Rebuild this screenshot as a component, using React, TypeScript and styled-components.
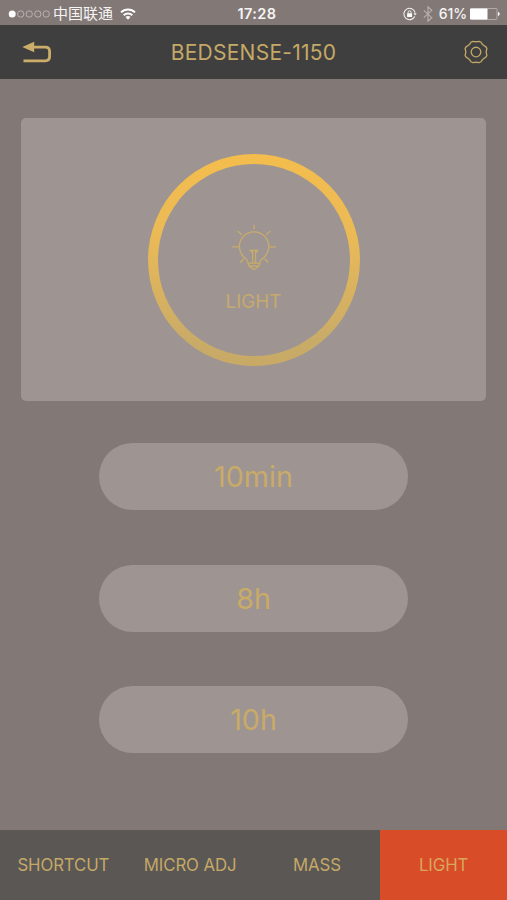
import React from 'react';
import styled, { createGlobalStyle } from 'styled-components';

const gold = '#c5a967';

const GlobalStyle = createGlobalStyle`
  * { box-sizing: border-box; }
  body { margin: 0; background: #827977; }
  button { border: 0; padding: 0; background: none; font: inherit; color: inherit; }
`;

const Screen = styled.div`
  width: 507px;
  height: 900px;
  display: flex;
  flex-direction: column;
  background: #827977;
  color: ${gold};
  font-family: Inter, 'Noto Sans CJK SC', sans-serif;
  overflow: hidden;
`;

const StatusBar = styled.div`
  height: 25px;
  flex: none;
  display: grid;
  grid-template-columns: 1fr auto 1fr;
  align-items: center;
  padding: 2px 7px 0 8px;
  color: #f6f4f3;
  font-size: 14px;
  line-height: 20px;
`;

const StatusGroup = styled.div<{ $end?: boolean }>`
  display: flex;
  align-items: center;
  justify-content: ${p => (p.$end ? 'flex-end' : 'flex-start')};
  svg { display: block; flex: none; }
`;

const Carrier = styled.span`
  font-family: 'Noto Sans CJK SC', sans-serif;
  font-size: 15px;
  margin: -1px 7px 0 2px;
`;

const Clock = styled.span`
  font-size: 14.5px;
  font-weight: 600;
  letter-spacing: 0.4px;
  padding-left: 6px;
`;

const Percent = styled.span`
  font-size: 14px;
  font-weight: 500;
  letter-spacing: -0.1px;
  margin: 0 3px 0 6px;
`;

const Header = styled.header`
  height: 54px;
  flex: none;
  display: grid;
  grid-template-columns: 60px 1fr 60px;
  align-items: center;
  background: #403f3f;
  svg { display: block; }
`;

const Title = styled.h1`
  margin: 0;
  padding-top: 2px;
  font-size: 21px;
  line-height: 26px;
  font-weight: 400;
  letter-spacing: 0.25px;
  text-align: center;
`;

const BackButton = styled.button`
  padding: 1px 0 0 21px;
`;

const SettingsButton = styled.button`
  padding-left: 17px;
`;

const Main = styled.main`
  flex: 1;
  display: flex;
  flex-direction: column;
  align-items: center;
  padding-top: 39.4px;
`;

const Card = styled.section`
  width: 465px;
  height: 283px;
  display: flex;
  align-items: center;
  justify-content: center;
  border-radius: 5px;
  background: #9e9592;
`;

const Dial = styled.button`
  width: 212px;
  height: 212px;
  border-radius: 50%;
  border: 10px solid transparent;
  background:
    linear-gradient(#9e9592, #9e9592) padding-box,
    linear-gradient(#f4bd4d 0%, #ebba56 38%, #c9ab68 88%, #c8aa66 100%) border-box;
  display: flex;
  flex-direction: column;
  align-items: center;
  padding-top: 60px;
`;

const DialLabel = styled.span`
  margin-top: 18px;
  font-size: 18.7px;
  line-height: 24px;
  letter-spacing: 0.1px;
  color: #c6aa6c;
`;

const Timers = styled.div`
  margin-top: 42px;
  display: grid;
  grid-auto-rows: 67px;
  gap: 54.3px;
`;

const Timer = styled.button`
  width: 309px;
  border-radius: 34px;
  background: #9e9592;
  color: #c9ab67;
  font-size: 28.7px;
  line-height: 67px;
  text-align: center;
`;

const TabBar = styled.nav`
  height: 70px;
  flex: none;
  display: grid;
  grid-template-columns: repeat(4, 1fr);
  background: #5a5755;
`;

const Tab = styled.button<{ $active?: boolean }>`
  font-size: 16.8px;
  letter-spacing: -0.1px;
  background: ${p => (p.$active ? '#d84c27' : 'transparent')};
  color: ${p => (p.$active ? '#d8a65c' : gold)};
`;

const Signal = () => (
  <svg width="43" height="10" viewBox="0 0 43 10">
    <circle cx="4.2" cy="5" r="3.5" fill="#fff" />
    {[12.7, 21.2, 29.8, 38.2].map(x => (
      <circle key={x} cx={x} cy="5" r="3.2" fill="none" stroke="#c4bebc" strokeWidth=".8" />
    ))}
  </svg>
);

const Wifi = () => (
  <svg width="16" height="12" viewBox="0 0 16 12" fill="none" stroke="#fff" strokeWidth="2">
    <path d="M1 4.4a10 10 0 0 1 14 0M3.7 7.2a6.2 6.2 0 0 1 8.6 0" />
    <path d="M8 11.7 5.5 9.1a3.6 3.6 0 0 1 5 0z" fill="#fff" stroke="none" />
  </svg>
);

const RotationLock = () => (
  <svg width="14" height="14" viewBox="0 0 14 14" fill="none" stroke="#f4f1f0">
    <path d="M11.7 9.5A5.7 5.7 0 1 1 12.1 5.6" strokeWidth="1.1" />
    <path d="m10.5 6.2 3.2 0-1.6 2.4z" fill="#f4f1f0" stroke="none" />
    <rect x="4.1" y="6.2" width="5" height="3.7" rx=".4" fill="#fff" stroke="none" />
    <path d="M5.1 6.4V5.3a1.5 1.5 0 0 1 3 0v1.1" strokeWidth="1" />
  </svg>
);

const Bluetooth = () => (
  <svg width="10" height="16" viewBox="0 0 10 16" fill="none" stroke="#b9b2b0" strokeWidth="1.1">
    <path d="m.8 4.3 8 7.4L5 15.2V.8l3.8 3.5-8 7.4" />
  </svg>
);

const Battery = () => (
  <svg width="30" height="12" viewBox="0 0 30 12">
    <rect x=".5" y=".5" width="26.5" height="11" rx="1" fill="none" stroke="#bdb7b5" strokeWidth=".8" />
    <rect x="0" y=".5" width="17.5" height="11" rx=".8" fill="#fff" />
    <path d="M28 3.8q3.5 2.2 0 4.4z" fill="#fff" />
  </svg>
);

const BackIcon = () => (
  <svg width="31" height="23" viewBox="0 0 31 23">
    <path d="M11 6.2h13.4q4.2 0 4.2 4.2v4.9q0 4.5-4.2 4.5H2.5" fill="none" stroke="#cbae69" strokeWidth="2.8" />
    <path d="M1.3 6 13.2.8v10.4z" fill="#cbae69" />
  </svg>
);

const GearIcon = () => (
  <svg width="24" height="24" viewBox="0 0 24 24" fill="none" stroke="#c0a667" strokeWidth="1.35">
    <path d="M8.8 1.3Q12 2.2 15.2 1.3 17.4 1.6 18.3 4.2L20.8 6.2Q23.3 7.4 22.8 9.3 21.6 12 22.8 14.7 23.3 16.6 20.8 17.8L18.3 19.8Q17.4 22.4 15.2 22.7 12 21.8 8.8 22.7 6.6 22.4 5.7 19.8L3.2 17.8Q.7 16.6 1.2 14.7 2.4 12 1.2 9.3.7 7.4 3.2 6.2L5.7 4.2Q6.6 1.6 8.8 1.3Z" strokeLinejoin="round" />
    <circle cx="12" cy="12" r="4.8" />
  </svg>
);

const BulbIcon = () => (
  <svg width="46" height="48" viewBox="0 0 46 48" fill="none" stroke="#c9ac6a" strokeWidth="1.25">
    <path d="M17.2 39.2c0-2.5-1.5-3.7-3-5A14.7 14.7 0 1 1 32 34.2c-1.6 1.3-3.2 2.5-3.2 5Z" />
    <path d="M17.2 39.2c0 3 1.6 3.6 3.2 4.2.5 2.6 4.7 2.6 5.2 0 1.6-.6 3.2-1.2 3.2-4.2M18.5 42h9M18.5 26.3h9M21.7 26.3v13M24.6 26.3v13M19.6 26.6l2 2.4M26.6 26.6l-2 2.4M23 .8v4.4M1 22.8h6.5M38.5 22.8H45M6.6 6.9l4.2 3.9M39.4 6.9l-4.2 3.9M9.2 38.5l3.6-3.8M37.2 38.5l-3.6-3.8" />
  </svg>
);

const Gap = styled.span`
  width: 6px;
`;

const timers = ['10min', '8h', '10h'];
const tabs = ['SHORTCUT', 'MICRO ADJ', 'MASS', 'LIGHT'];

export default function App() {
  return (
    <Screen>
      <GlobalStyle />
      <StatusBar>
        <StatusGroup>
          <Signal />
          <Carrier>中国联通</Carrier>
          <Wifi />
        </StatusGroup>
        <Clock>17:28</Clock>
        <StatusGroup $end>
          <RotationLock />
          <Gap />
          <Bluetooth />
          <Percent>61%</Percent>
          <Battery />
        </StatusGroup>
      </StatusBar>
      <Header>
        <BackButton aria-label="Back"><BackIcon /></BackButton>
        <Title>BEDSENSE-1150</Title>
        <SettingsButton aria-label="Settings"><GearIcon /></SettingsButton>
      </Header>
      <Main>
        <Card>
          <Dial>
            <BulbIcon />
            <DialLabel>LIGHT</DialLabel>
          </Dial>
        </Card>
        <Timers>
          {timers.map(t => <Timer key={t}>{t}</Timer>)}
        </Timers>
      </Main>
      <TabBar>
        {tabs.map(t => <Tab key={t} $active={t === 'LIGHT'}>{t}</Tab>)}
      </TabBar>
    </Screen>
  );
}
